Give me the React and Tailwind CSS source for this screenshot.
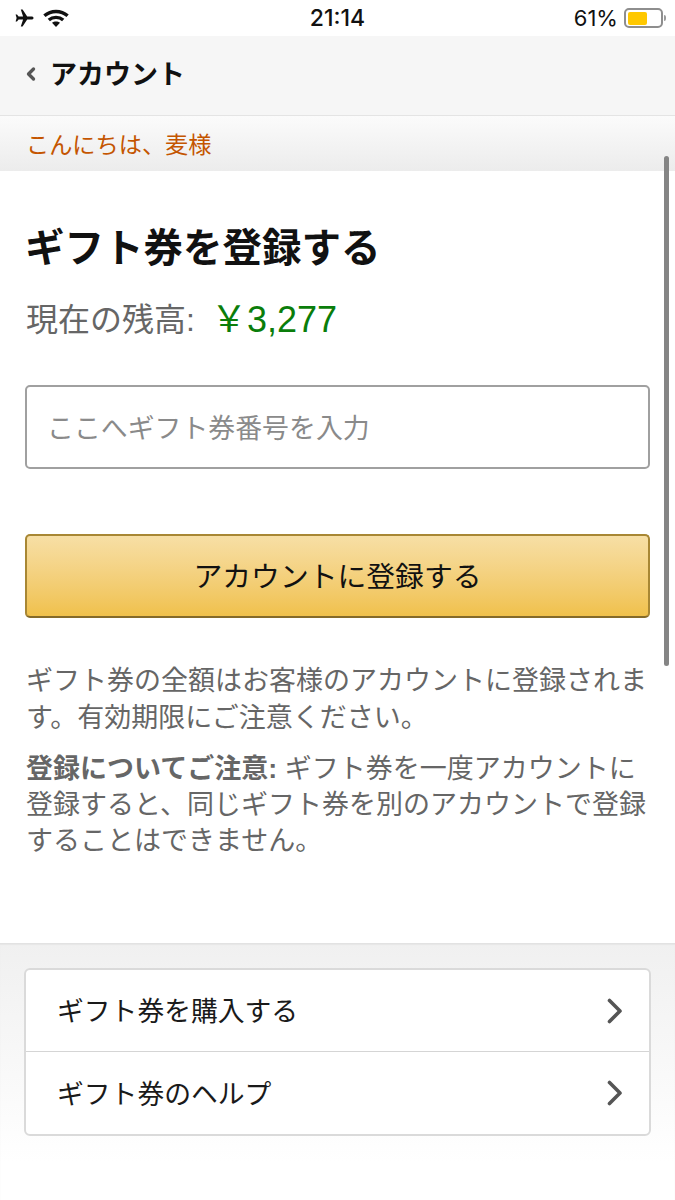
import { ChevronLeft } from 'lucide-react';

const FONT = "font-['Liberation_Sans','Noto_Sans_CJK_JP',sans-serif]";

const StatusBar = () => (
  <div className="grid h-9 grid-cols-3 items-center bg-white pl-[14px] pr-[9px] font-['Inter',sans-serif]">
    <div className="flex items-center gap-[9px]">
      {/* airplane */}
      <svg width="20" height="18" viewBox="0 0 20 18" fill="#111">
        <path d="M19.6 9c0-.9-1-1.5-2-1.5h-4.4L8.6.6H6.8l2.3 6.9H4.6L3 5.4H1.6l1 3.6-1 3.6H3l1.6-2.1h4.5l-2.3 6.9h1.8l4.6-6.9h4.4c1 0 2-.6 2-1.5z" />
      </svg>
      {/* wifi */}
      <svg width="26" height="18" viewBox="0 0 26 18" fill="none" stroke="#111" strokeWidth="3.4">
        <path d="M1.4 6.8c6.6-5.8 16.6-5.8 23.2 0" />
        <path d="M5.8 11c4-3.5 10.4-3.5 14.4 0" />
        <path d="M13 18l4-4.2c-2.2-1.8-5.8-1.8-8 0z" fill="#111" stroke="none" />
      </svg>
    </div>
    <span className="pr-[5px] pt-[1px] text-center text-[23px] font-medium text-[#111]">21:14</span>
    <div className="flex items-center justify-end gap-[6px]">
      <span className="text-[22px] text-[#111]">61%</span>
      <div className="flex items-center">
        <div className="flex h-[20px] w-[39px] items-center rounded-[5px] border-2 border-[#8e8e8e] pl-[2px]">
          <div className="h-[13px] w-[19px] rounded-[2px] bg-[#ffc800]" />
        </div>
        <div className="ml-[1px] h-[6px] w-[2px] rounded-r-sm bg-[#9a9a9a]" />
      </div>
    </div>
  </div>
);

const LinkRow = ({ label, last }) => (
  <div className={`flex h-[82px] items-center justify-between pl-[31px] pr-[26px] ${last ? '' : 'border-b border-[#d5d5d5]'}`}>
    <span className="pt-[4px] text-[26.8px] text-[#1a1a1a]">{label}</span>
    <svg width="16" height="26" viewBox="0 0 16 26" fill="none" stroke="#555" strokeWidth="3.6" strokeLinecap="round" strokeLinejoin="round">
      <path d="M2.5 2.5L13 13 2.5 23.5" />
    </svg>
  </div>
);

export default function App() {
  return (
    <div className={`${FONT} relative h-[1200px] w-[675px] overflow-hidden bg-white`}>
      <StatusBar />

      {/* nav header */}
      <div className="flex h-[80px] items-center border-b border-[#e4e4e4] bg-[#f6f6f6] pl-[21px]">
        <ChevronLeft size={20} strokeWidth={4} color="#555" className="mb-[3px]" />
        <span className="ml-[9px] text-[27px] font-bold text-[#111]">アカウント</span>
      </div>

      {/* greeting */}
      <div className="flex h-[55px] items-center bg-gradient-to-b from-[#fbfbfb] to-[#ececec] pl-[26px] pt-[4px]">
        <span className="text-[23.2px] text-[#c45500]">こんにちは、麦様</span>
      </div>

      <main className="h-[772px] px-[25px] pt-[52px]">
        <h1 className="text-[39.5px] leading-[50px] font-bold text-[#111]">ギフト券を登録する</h1>

        <div className="mt-[22px] flex items-center leading-[50px]">
          <span className="pl-[1px] text-[32px] text-[#666]">現在の残高:</span>
          <span className="ml-[16px] text-[36px] text-[#0a7d0a]">￥3,277</span>
        </div>

        <div className="mt-[40px] flex h-[84px] items-center rounded-[5px] border-2 border-[#a0a0a0] bg-white pl-[20px] pt-[4px]">
          <span className="text-[26.9px] text-[#8a8a8a]">ここへギフト券番号を入力</span>
        </div>

        <button className="mt-[65px] flex h-[84px] w-full items-center justify-center rounded-[5px] border-2 border-[#a88734] border-b-[#846a29] bg-gradient-to-b from-[#f7dfa5] to-[#f0c14b] pt-[4px] text-[28.8px] text-[#111]">
          アカウントに登録する
        </button>

        <p className="mt-[45px] pl-[1px] text-[27px] leading-[37px] text-[#666]">
          ギフト券の全額はお客様のアカウントに登録されます。有効期限にご注意ください。
        </p>
        <p className="mt-[14px] pl-[1px] text-[27px] leading-[36px] text-[#666]">
          <b className="font-bold">登録についてご注意:</b> ギフト券を一度アカウントに登録すると、同じギフト券を別のアカウントで登録することはできません。
        </p>
      </main>

      {/* footer links */}
      <div className="h-[257px] border-t border-[#e2e2e2] bg-gradient-to-b from-[#f0f0f0] to-white to-[85%] px-6 pt-[24px] shadow-[inset_0_1px_1px_#e6e6e6]">
        <div className="rounded-[6px] border-2 border-[#dadada] bg-white">
          <LinkRow label="ギフト券を購入する" />
          <LinkRow label="ギフト券のヘルプ" last />
        </div>
      </div>

      {/* scroll indicator */}
      <div className="absolute top-[156px] left-[664px] h-[510px] w-[5px] rounded-full bg-[#858585]" />
    </div>
  );
}
